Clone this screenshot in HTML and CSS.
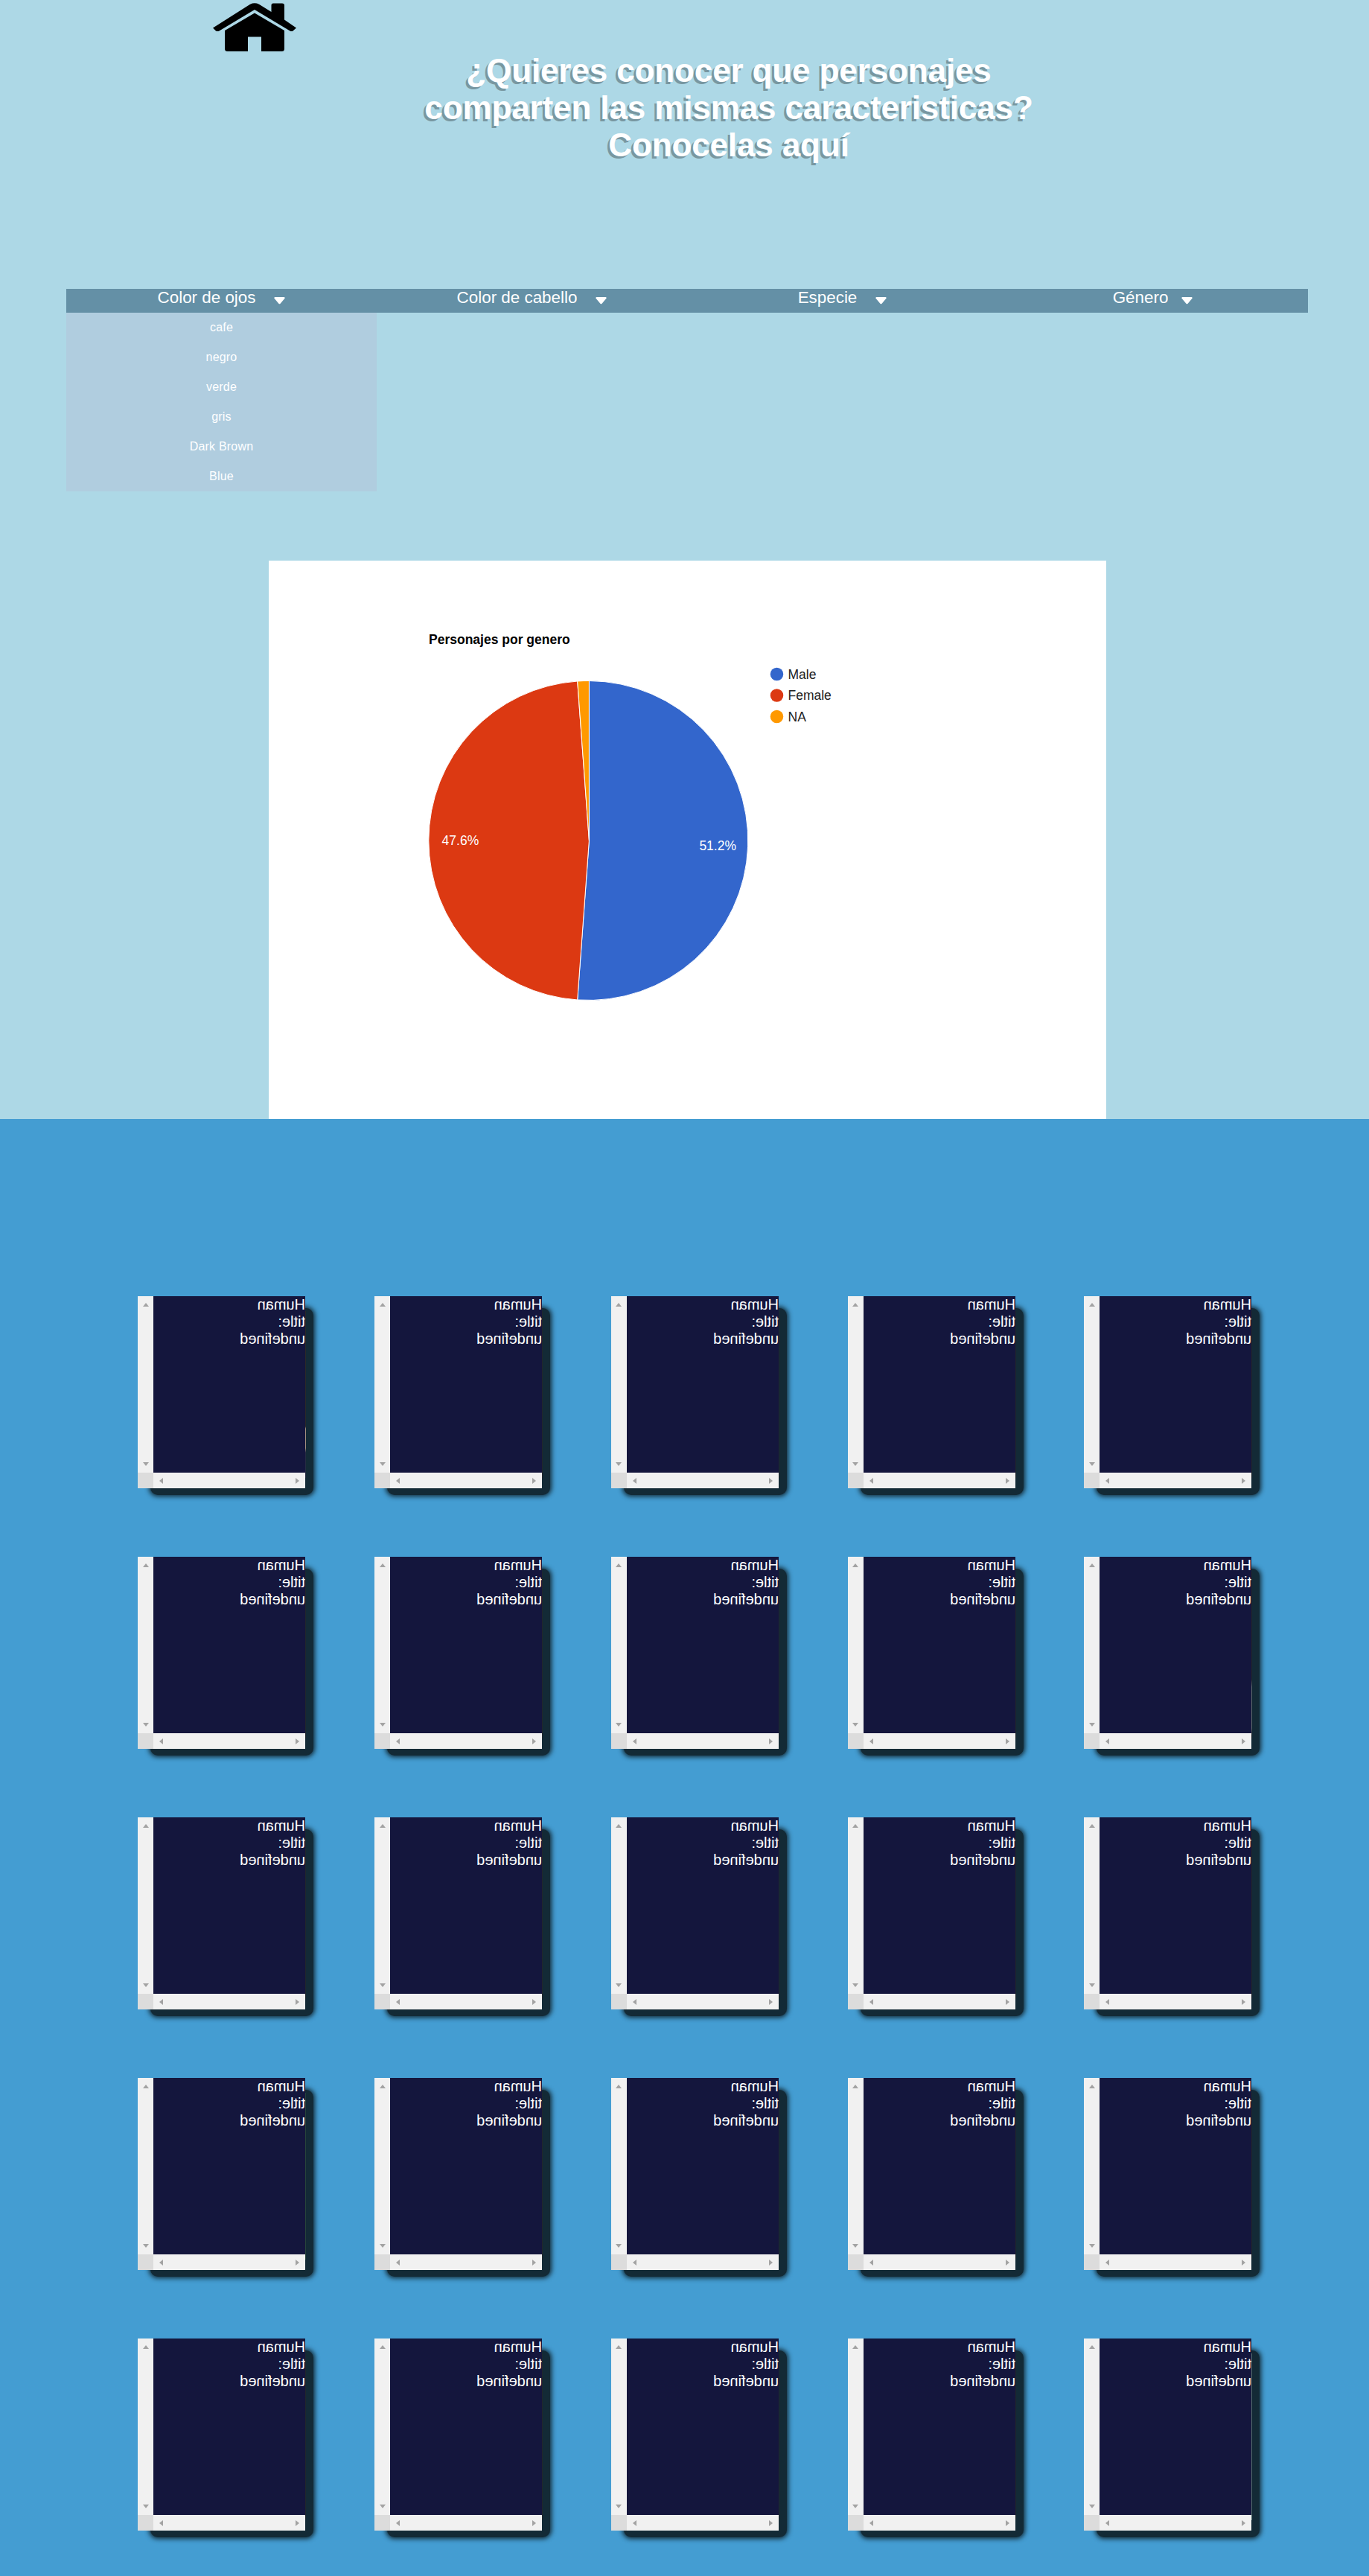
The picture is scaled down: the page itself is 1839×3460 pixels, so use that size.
FILE: index.html
```html
<!DOCTYPE html>
<html lang="es">
<head>
<meta charset="utf-8">
<title>Personajes</title>
<link rel="stylesheet" href="styles.css">
</head>
<body>
<header class="header">
  <a class="home" aria-label="Inicio"><svg width="112" height="66" viewBox="0 0 112 66">
    <path d="M0 33.500L50 1.700Q56 -1.200 62 1.700L78.500 12V3Q78.500 0.500 81 0.500H93Q96 0.500 96 3V22.500L112 33.500L107.500 37.500Q105.500 38.500 103.500 37.500L56 9L8.500 37.500Q6 38.500 4 37.500Z"/>
    <path d="M16 37L56 13.500L96 37V61.500Q96 65 92.500 65H65V45.500H47V65H19.500Q16 65 16 61.500Z"/>
  </svg></a>
  <h1 class="title">¿Quieres conocer que personajes comparten las mismas caracteristicas? Conocelas aquí</h1>
</header>
<nav class="menu">
  <div class="menu-item">Color de ojos<svg class="caret" viewBox="0 0 15 10"><path d="M1.500 0H13.500Q15.500 .5 14.300 2L8.600 8.700Q7.500 10 6.400 8.700L.7 2Q-.5 .5 1.500 0Z"/></svg>
    <ul class="submenu"><li>cafe</li><li>negro</li><li>verde</li><li>gris</li><li>Dark Brown</li><li>Blue</li></ul>
  </div>
  <div class="menu-item">Color de cabello<svg class="caret" viewBox="0 0 15 10"><path d="M1.500 0H13.500Q15.500 .5 14.300 2L8.600 8.700Q7.500 10 6.400 8.700L.7 2Q-.5 .5 1.500 0Z"/></svg></div>
  <div class="menu-item">Especie<svg class="caret" viewBox="0 0 15 10"><path d="M1.500 0H13.500Q15.500 .5 14.300 2L8.600 8.700Q7.500 10 6.400 8.700L.7 2Q-.5 .5 1.500 0Z"/></svg></div>
  <div class="menu-item tight">Género<svg class="caret" viewBox="0 0 15 10"><path d="M1.500 0H13.500Q15.500 .5 14.300 2L8.600 8.700Q7.500 10 6.400 8.700L.7 2Q-.5 .5 1.500 0Z"/></svg></div>
</nav>
<svg class="chart" width="1125" height="750" viewBox="0 0 1125 750">
  <text class="chart-title" x="215" y="112">Personajes por genero</text>
  <g class="slices" transform="translate(.4 0)">
    <path fill="#3366cc" d="M430 376V161.500A214.500 214.500 0 1 1 414.300 590Z"/>
    <path fill="#dc3912" d="M430 376L414.300 590A214.500 214.500 0 0 1 414.300 162Z"/>
    <path fill="#ff9900" d="M430 376L414.300 162A214.500 214.500 0 0 1 430 161.500Z"/>
  </g>
  <text class="slice-label" x="232.600" y="382">47.6%</text>
  <text class="slice-label" x="578.400" y="389">51.2%</text>
  <circle cx="682.500" cy="152.500" r="8.750" fill="#3366cc"/><text class="legend" x="697.500" y="159">Male</text>
  <circle cx="682.500" cy="181" r="8.750" fill="#dc3912"/><text class="legend" x="697.500" y="187">Female</text>
  <circle cx="682.500" cy="209.500" r="8.750" fill="#ff9900"/><text class="legend" x="697.500" y="216">NA</text>
</svg>
<main class="cards" id="cards"></main>
<script src="cards.js"></script>
</body>
</html>
```
FILE: styles.css
```css
* { box-sizing: border-box; }
body { margin: 0; background: #add8e6; font-family: "Liberation Sans", Arial, sans-serif; overflow-x: hidden; }
.header { height: 388px; }
.home { display: block; height: 70px; padding: 4px 0 0 286px; }
.home svg { display: block; }
.title { width: 860px; margin: 0 0 0 549px; color: #fff; font-size: 44px; line-height: 50px; letter-spacing: -.12px; text-align: center; text-shadow: -3px 3px 0 #7897a1; }
.menu { display: flex; width: 1668px; height: 32px; margin-left: 89px; background: #6490a6; color: #fff; font-size: 22.400px; line-height: 24px; }
.menu-item { position: relative; flex: 1; text-align: center; }
.caret { width: 15px; height: 10px; margin-left: 25px; fill: #fff; vertical-align: -2px; }
.tight .caret { margin-left: 18px; }
.submenu { position: absolute; top: 32px; left: 0; width: 417px; margin: 0; padding: 0; list-style: none; background: #b0cddf; font-size: 16px; line-height: 40px; letter-spacing: .2px; }
.submenu li { height: 40px; }
.chart { display: block; margin: 333px 0 0 361px; background: #fff; }
.chart text { font-size: 17.500px; }
.chart .chart-title { font-weight: bold; }
.slices { stroke: #fff; stroke-width: 1; }
.slice-label { fill: #fff; }
.legend { fill: #222; }
.cards { display: grid; align-content: start; grid-template-columns: repeat(5, 225px); column-gap: 92.750px; row-gap: 92px; height: 1957px; padding: 238px 0 0 185.300px; background: #449dd2; }
.card { position: relative; isolation: isolate; display: grid; grid-template: 237px 21px / 21px 204px; width: 225px; height: 258px; }
.card::before { content: ""; position: absolute; z-index: -1; inset: 16px -11px -9px 17px; border-radius: 10px; background: #132a36; box-shadow: 0 0 6px 2px #132a36; }
.photo-edge { position: absolute; top: 20px; right: -1px; width: 1px; height: 224px; background: #20262c; }
.card:nth-child(1) .photo-edge { background: linear-gradient(#2b2928 155px, #a3907f 158px 184px, #262c42 190px); }
.card:nth-child(10) .photo-edge { background: linear-gradient(#20262c 145px, #5d686b 155px 210px, #20262c 220px); }
.card:nth-child(16) .photo-edge { background: #27443a; }
.card:nth-child(25) .photo-edge { background: #536b6c; }
.card-body { background: #14163d; color: #fff; font-size: 20px; line-height: 23px; transform: scaleX(-1); }
.card-body p { margin: 0; }
.bar { display: flex; justify-content: space-between; align-items: center; background: #f1f1f1; }
.bar.vertical { flex-direction: column; padding: 9px 0; }
.bar.horizontal { padding: 0 8px; }
.bar svg { display: block; fill: #a3a3a3; }
.corner { background: #dcdcdc; }
```
FILE: cards.js
```js
const card = `<article class="card">
  <div class="bar vertical"><svg width="8" height="5"><path d="M4 0L8 5H0Z"/></svg><svg width="8" height="5"><path d="M0 0H8L4 5Z"/></svg></div>
  <div class="card-body"><p>Human</p><p>title:</p><p>undefined</p></div>
  <div class="corner"></div>
  <div class="bar horizontal"><svg width="5" height="8"><path d="M5 0V8L0 4Z"/></svg><svg width="5" height="8"><path d="M0 0L5 4L0 8Z"/></svg></div>
  <div class="photo-edge"></div>
</article>`;
document.getElementById('cards').innerHTML = card.repeat(25);
```
